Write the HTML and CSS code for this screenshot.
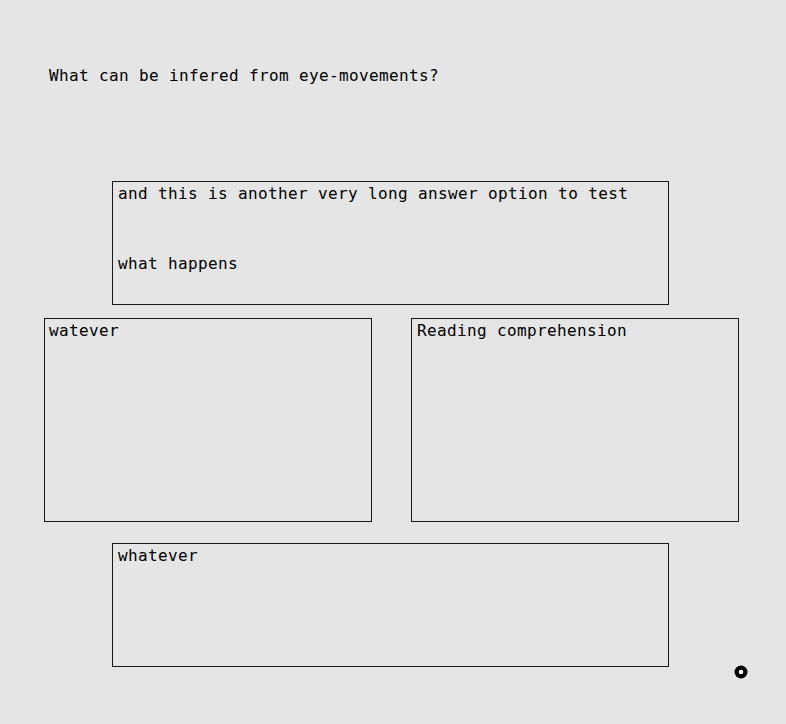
FILE: index.html
```html
<!DOCTYPE html>
<html lang="en">
<head>
<meta charset="utf-8">
<title>Question</title>
<link rel="stylesheet" href="styles.css">
</head>
<body>
<main class="page">
  <p class="question">What can be infered from eye-movements?</p>
  <div class="options">
    <div class="option option-wide"><p class="label">and this is another very long answer option to test what happens</p></div>
    <div class="option-row">
      <div class="option option-tall"><p class="label">watever</p></div>
      <div class="option option-tall"><p class="label">Reading comprehension</p></div>
    </div>
    <div class="option option-wide option-last"><p class="label">whatever</p></div>
  </div>
  <div class="dot" aria-hidden="true">
    <svg width="14" height="14" viewBox="0 0 14 14"><circle cx="7" cy="7" r="6.5" fill="#000"/><circle cx="7" cy="7" r="2.3" fill="#fff"/></svg>
  </div>
</main>
</body>
</html>
```

FILE: styles.css
```css
html, body {
  margin: 0;
  padding: 0;
  background: #e5e5e5;
}
.page {
  position: relative;
  width: 786px;
  height: 724px;
  font-family: "DejaVu Sans Mono", "Liberation Mono", monospace;
  font-size: 16px;
  letter-spacing: 0.37px;
  color: #000;
}
.question {
  margin: 0;
  padding: 66px 0 0 49px;
  line-height: 20px;
}
.options {
  margin: 95px 0 0 44px;
  width: 695px;
}
.option {
  box-sizing: border-box;
  border: 1px solid #1a1a1a;
  padding: 0 5px;
  overflow: visible;
}
.option-wide {
  width: 557px;
  height: 124px;
  margin-left: 68px;
}
.option-row {
  display: grid;
  grid-template-columns: 328px 328px;
  column-gap: 39px;
  margin-top: 13px;
}
.option-tall {
  height: 204px;
  padding-left: 4px;
}
.option-tall + .option-tall {
  padding-left: 5px;
}
.option-last {
  margin-top: 21px;
}
.label {
  margin: -23px 0 0 0;
  line-height: 70px;
}
.dot {
  position: absolute;
  left: 734px;
  top: 665px;
  width: 14px;
  height: 14px;
}
.dot svg {
  display: block;
}
```
